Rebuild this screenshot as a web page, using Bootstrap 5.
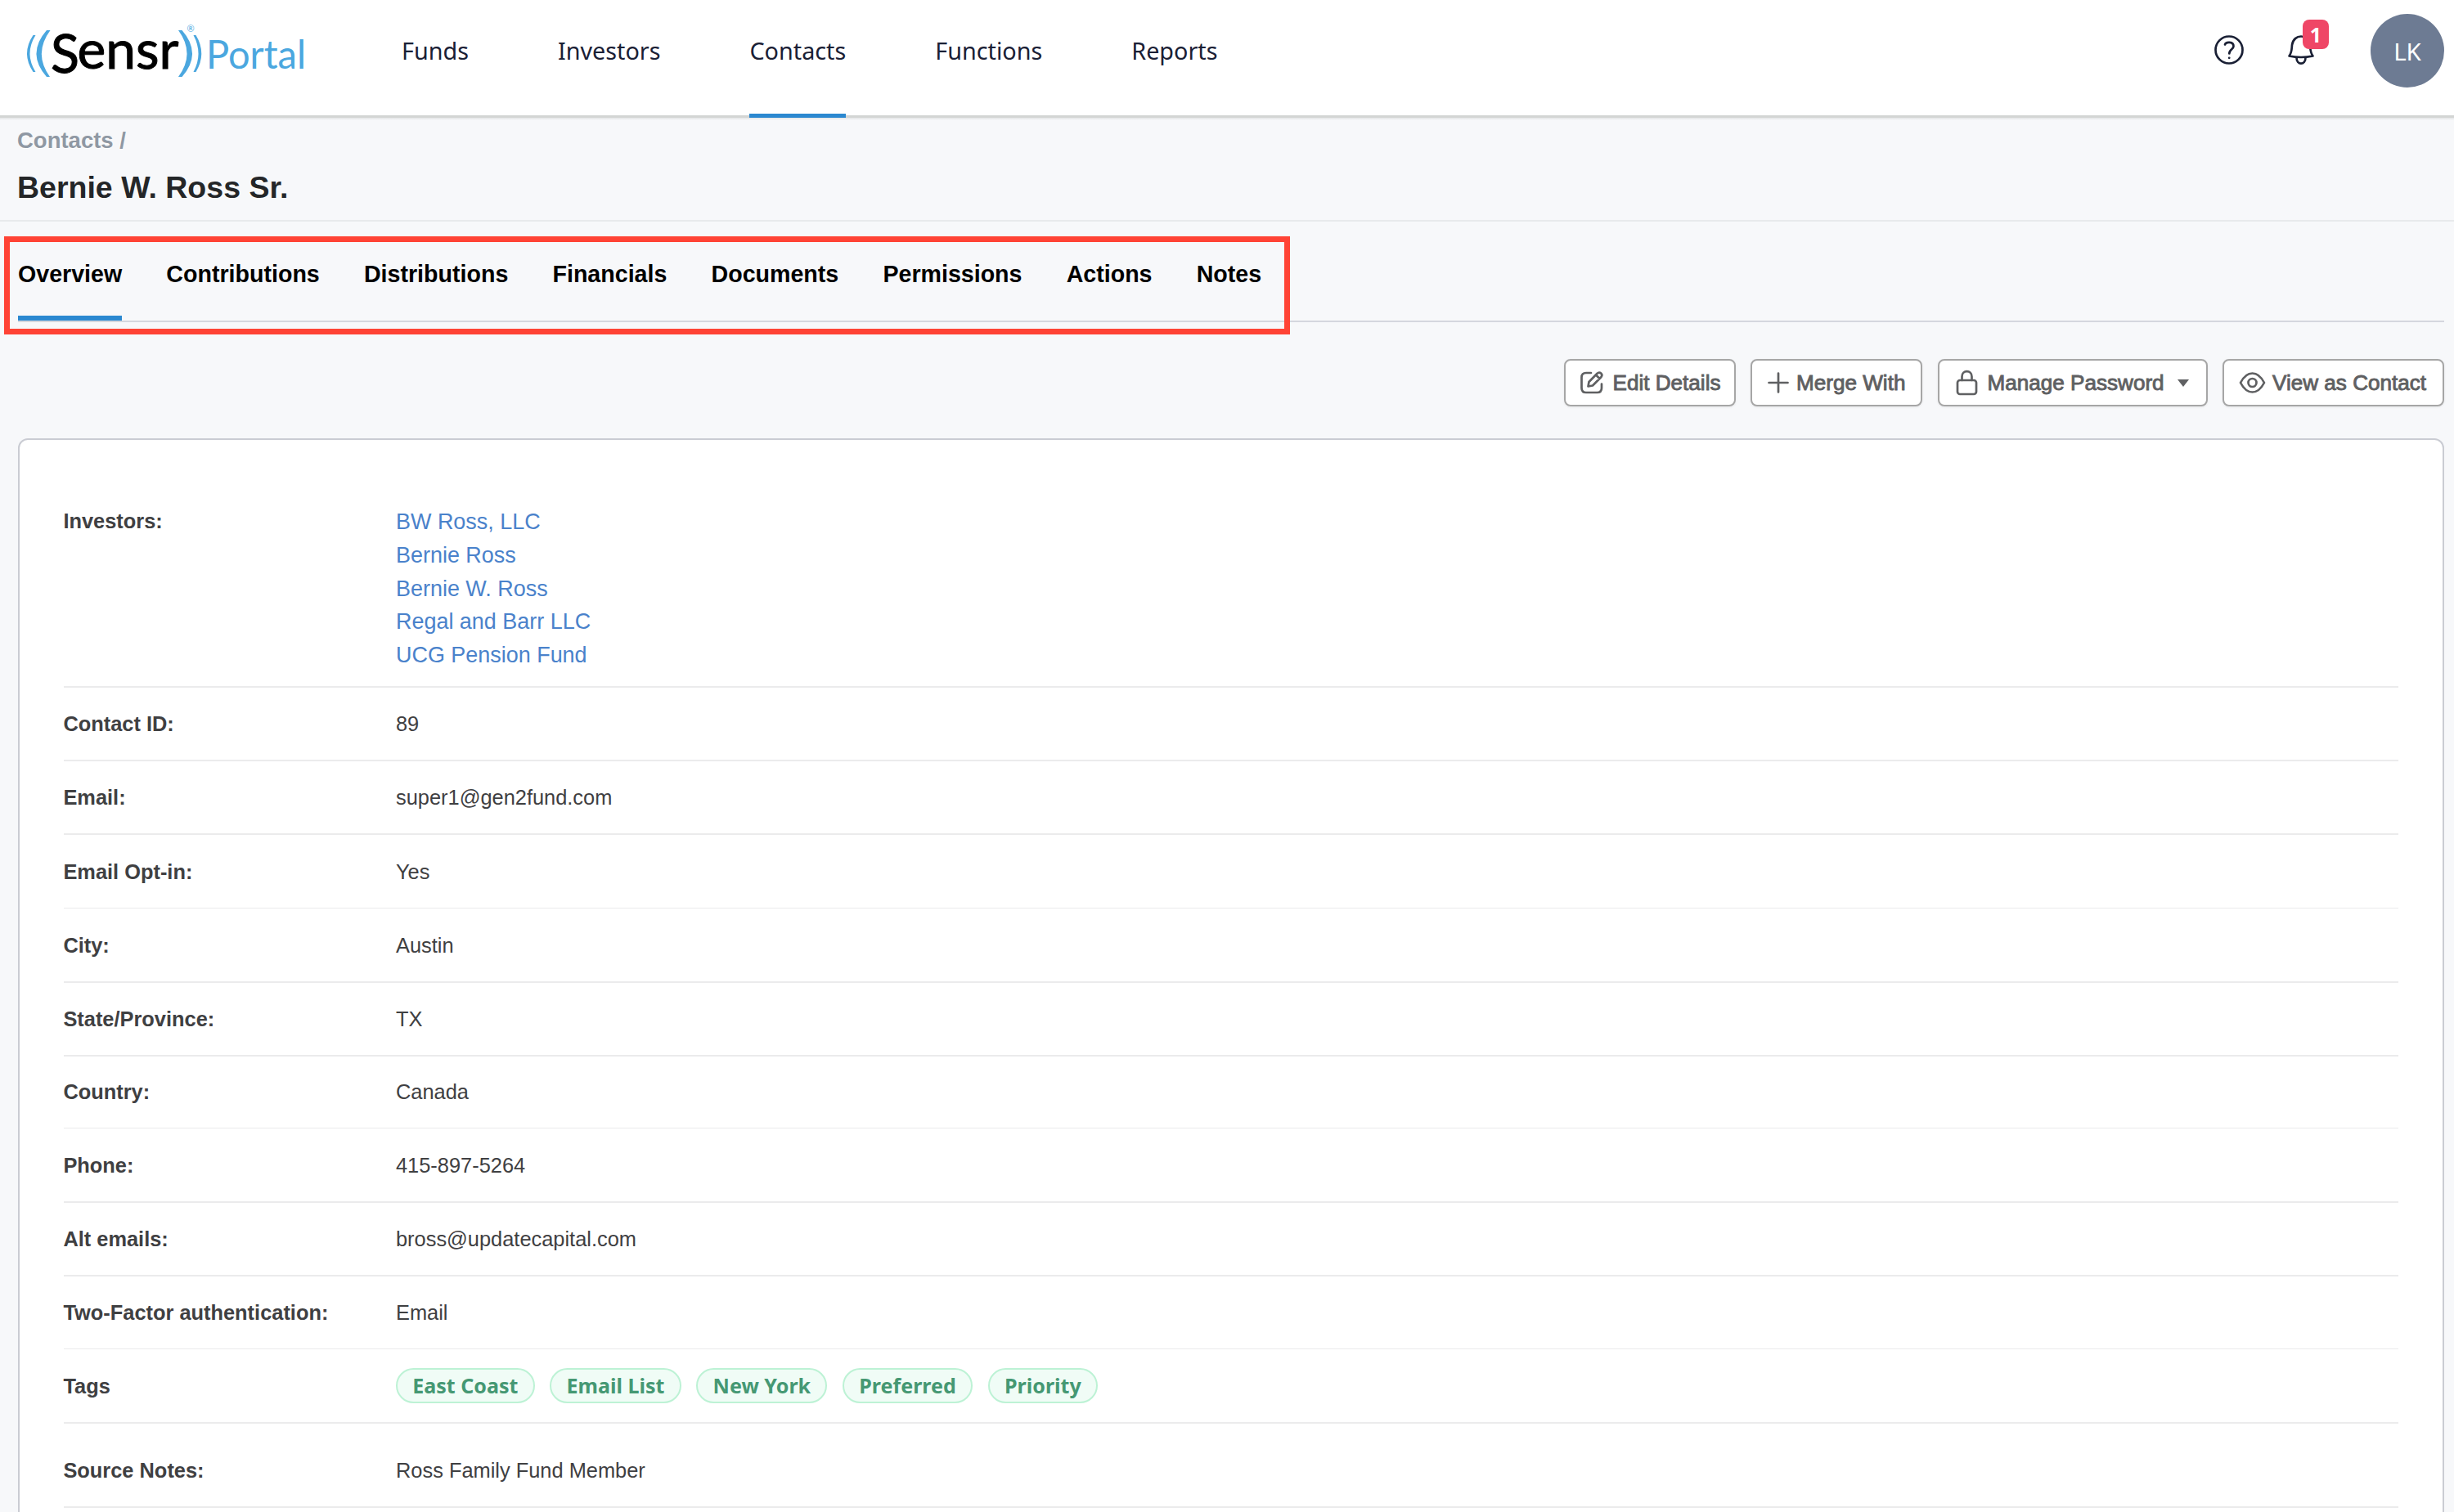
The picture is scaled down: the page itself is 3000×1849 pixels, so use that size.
<!DOCTYPE html>
<html lang="en">
<head>
<meta charset="utf-8">
<title>Bernie W. Ross Sr. - Sensr Portal</title>
<link href="https://cdn.jsdelivr.net/npm/bootstrap@5.3.0/dist/css/bootstrap.min.css" rel="stylesheet">
<style>
body{background:#f7f8fa;font-family:"Liberation Sans",Arial,sans-serif;color:#3f4042;height:1849px;overflow:hidden}
svg{flex:none;overflow:visible}
.topbar{height:141px;background:#fff;padding:0 12px 0 30px}
.topshade{height:6px;background:linear-gradient(#d3d5d4 0 2.5px,#e6e8e9 3.5px,#f7f8fa)}
.mainmenu{padding-left:111px;gap:109px}
.mainlink{font:28.75px/36px "Noto Sans",sans-serif;color:#1a2035;height:144px;padding-top:44px;text-decoration:none;white-space:nowrap}
.mainlink.active{border-bottom:5px solid #2b88d0;position:relative}
.tools{gap:54px;padding-top:43px;margin-right:69px}
.avatar{width:90px;height:90px;border-radius:50%;background:#6d7b93;color:#fff;font:29.5px "Noto Sans",sans-serif;margin-top:17px}
.alertnum{position:absolute;left:18px;top:-19px;width:32px;height:36px;border-radius:8px;background:#ef4666;color:#fff;font:bold 25px/36px "Noto Sans",sans-serif;text-align:center}
.crumb{font-weight:bold;font-size:27.5px;line-height:30px;color:#8f98a3;padding:10px 0 0 21px;text-shadow:0 1px #fff}
.person{font-weight:bold;font-size:37.5px;line-height:44px;color:#242628;margin:0;padding:20px 0 0 21px;height:84px;border-bottom:2px solid #e8eaec;text-shadow:0 1px #fff}
.tabrow{height:123px;margin:0 12px 0 22px;padding-top:44px;border-bottom:2px solid #d5d7de;gap:54.2px}
.tabrow a{font-weight:bold;font-size:28.6px;line-height:40px;color:#000;text-decoration:none;height:77px;white-space:nowrap}
.tabrow a.active{border-bottom:6px solid #2b88d0}
.callout-box{position:absolute;left:5px;top:289px;width:1572px;height:120px;border:7px solid #ff4335;pointer-events:none}
.actions{padding:45px 12px 0 0;gap:18.5px}
.actbtn{height:58px;border:2px solid #a6a6a6;border-radius:8px;background:#fff;color:#5f6062;font-size:26.1px;line-height:30px;-webkit-text-stroke:.9px #5f6062;white-space:nowrap;box-shadow:0 1px 3px #0001;padding:0 0 0 18px;text-align:left}
.actbtn svg{fill:none;stroke:#5f6062;stroke-width:2.7;stroke-linecap:round;stroke-linejoin:round}
.w-a{width:210px}.w-b{width:330px}.w-c{width:271px}
.caret{border:7px solid transparent;border-top:9px solid #5f6062;border-bottom:0;margin-left:16px}
.sheet{margin:39px 12px 0 22px;border:2px solid #caccd3;border-radius:12px 12px 0 0;background:#fff;padding:0 54px;height:1400px}
.field{height:90px;border-bottom:2px solid #ebebec;font-size:25.4px;line-height:30px;padding-bottom:29px}
.field b{width:406px;flex:none;text-indent:-.6px}
.field.thin{border-bottom-width:1px}
.h88{height:88px}.h89{height:89px}.h91{height:91px}.h103{height:103px}
.inv{height:303px;padding-bottom:0}
.inv b{margin-top:84px}
.inv div{margin-top:80px}
.inv a{display:block;color:#4a82cb;font-size:26.95px;line-height:40.75px;text-decoration:none}
.taglist{gap:18.8px;margin-bottom:-6px}
.taglet{height:43px;border:2px solid #bdf2d5;border-radius:22px;background:#f0fcf6;color:#459873;font:bold 25.05px/39px "Noto Sans",sans-serif;padding:0 18.2px;white-space:nowrap}
</style>
<script src="https://cdn.jsdelivr.net/npm/bootstrap@5.3.0/dist/js/bootstrap.bundle.min.js"></script>
</head>
<body>
<header class="topbar d-flex align-items-start">
<svg width="350" height="110" viewBox="30 0 350 110">
<g fill="#4ba7df">
<path d="M43.500 43Q29.500 65.500 43.500 88H40.500Q25.500 65.500 40.500 43Z"/>
<path d="M61.500 37Q40.500 65.500 61 94H57Q32 65.500 57 37Z"/>
<path d="M218 37H222.500Q247.500 65.500 222.500 94H218Q239 65.500 218 37Z"/>
<path d="M236.500 43H239.500Q253 65.500 239.500 88H236.500Q248.500 65.500 236.500 43Z"/>
</g>
<text x="62" y="88.700" font-family="Lato" font-size="65" textLength="35" lengthAdjust="spacingAndGlyphs" stroke="#000" stroke-width="1">S</text>
<text x="94.500" y="83.500" font-family="Lato" font-size="65" textLength="124" lengthAdjust="spacingAndGlyphs" stroke="#000" stroke-width="1">ensr</text>
<text x="228.500" y="39" font-family="Lato" font-size="11" fill="#4ba7df">®</text>
<text x="252" y="84" font-family="Lato" font-size="49" fill="#4ba7df" textLength="122" lengthAdjust="spacingAndGlyphs">Portal</text>
</svg>
<nav class="mainmenu d-flex">
<a class="mainlink" href="#">Funds</a><a class="mainlink" href="#">Investors</a><a class="mainlink active" href="#">Contacts</a><a class="mainlink" href="#">Functions</a><a class="mainlink" href="#">Reports</a>
</nav>
<div class="tools d-flex ms-auto">
<svg width="36" height="36" viewBox="0 0 36 36" fill="none" stroke="#1a2035" stroke-width="2.700" stroke-linecap="round"><circle cx="18" cy="18" r="16.500"/><path d="M13 11.500C14 8 23.500 7.500 23.500 13.500C23.500 17.500 18.300 17 18.300 22.500"/><circle cx="18.200" cy="27.800" r=".6" fill="#1a2035" stroke-width="1.600"/></svg>
<div class="position-relative">
<svg class="d-block" width="32" height="36" viewBox="0 0 32 36" fill="none" stroke="#1a2035" stroke-width="2.700" stroke-linejoin="round"><path d="M1.500 25.500C5 21 4.500 17 5 12C6 5 11 1.500 16 1.500S26 5 27 12C27.500 17 27 21 30.500 25.500Q16 28.500 1.500 25.500Z"/><path d="M10.500 27.500C10.500 37 21.500 37 21.500 27.500"/></svg>
<span class="alertnum">1</span>
</div>
</div>
<div class="avatar d-flex align-items-center justify-content-center">LK</div>
</header>
<div class="topshade"></div>
<div class="crumb">Contacts /</div>
<h1 class="person">Bernie W. Ross Sr.</h1>
<nav class="tabrow d-flex"><a class="active" href="#">Overview</a><a href="#">Contributions</a><a href="#">Distributions</a><a href="#">Financials</a><a href="#">Documents</a><a href="#">Permissions</a><a href="#">Actions</a><a href="#">Notes</a></nav>
<div class="callout-box"></div>
<div class="actions d-flex justify-content-end">
<button class="actbtn w-a d-flex align-items-center"><svg width="28" height="28" viewBox="0 0 28 28" class="me-2"><path d="M13 2H7Q1.500 2 1.500 7.500V20.500Q1.500 26 7 26H20.500Q26 26 26 20.500V15.500"/><path d="M9.500 18.500L10.500 13L20.500 2.700Q23 .5 25.200 2.600T25.500 7L15 17.500ZM19 4.500L23.500 9"/></svg><span class="ps-1">Edit Details</span></button>
<button class="actbtn w-a d-flex align-items-center"><svg width="28" height="28" viewBox="0 0 28 28" class="me-2"><path d="M14 2.500V25.500M2.500 14H25.500"/></svg>Merge With</button>
<button class="actbtn w-b d-flex align-items-center"><svg width="33" height="32" viewBox="0 0 33 32" class="me-2"><rect x="4" y="13" width="23" height="17" rx="3"/><path d="M9.500 13V8.500C9.500 0 21.500 0 21.500 8.500V13"/></svg>Manage Password<span class="caret"></span></button>
<button class="actbtn w-c d-flex align-items-center"><svg width="33" height="28" viewBox="-.5 0 33 28" class="me-2"><path d="M1.500 14Q7.500 2.500 16 2.500T30.500 14Q24.500 25.500 16 25.500T1.500 14Z"/><circle cx="16" cy="14" r="5"/></svg>View as Contact</button>
</div>
<main class="sheet">
<div class="field inv d-flex"><b>Investors:</b><div><a href="#">BW Ross, LLC</a><a href="#">Bernie Ross</a><a href="#">Bernie W. Ross</a><a href="#">Regal and Barr LLC</a><a href="#">UCG Pension Fund</a></div></div>
<div class="field d-flex align-items-end"><b>Contact ID:</b><span>89</span></div>
<div class="field d-flex align-items-end"><b>Email:</b><span>super1@gen2fund.com</span></div>
<div class="field thin d-flex align-items-end"><b>Email Opt-in:</b><span>Yes</span></div>
<div class="field h91 d-flex align-items-end"><b>City:</b><span>Austin</span></div>
<div class="field d-flex align-items-end"><b>State/Province:</b><span>TX</span></div>
<div class="field thin h88 d-flex align-items-end"><b>Country:</b><span>Canada</span></div>
<div class="field h91 d-flex align-items-end"><b>Phone:</b><span>415-897-5264</span></div>
<div class="field d-flex align-items-end"><b>Alt emails:</b><span>bross@updatecapital.com</span></div>
<div class="field thin h89 d-flex align-items-end"><b>Two-Factor authentication:</b><span>Email</span></div>
<div class="field h91 d-flex align-items-end"><b>Tags</b><div class="taglist d-flex"><span class="taglet">East Coast</span><span class="taglet">Email List</span><span class="taglet">New York</span><span class="taglet">Preferred</span><span class="taglet">Priority</span></div></div>
<div class="field h103 d-flex align-items-end"><b>Source Notes:</b><span>Ross Family Fund Member</span></div>
</main>
</body>
</html>
